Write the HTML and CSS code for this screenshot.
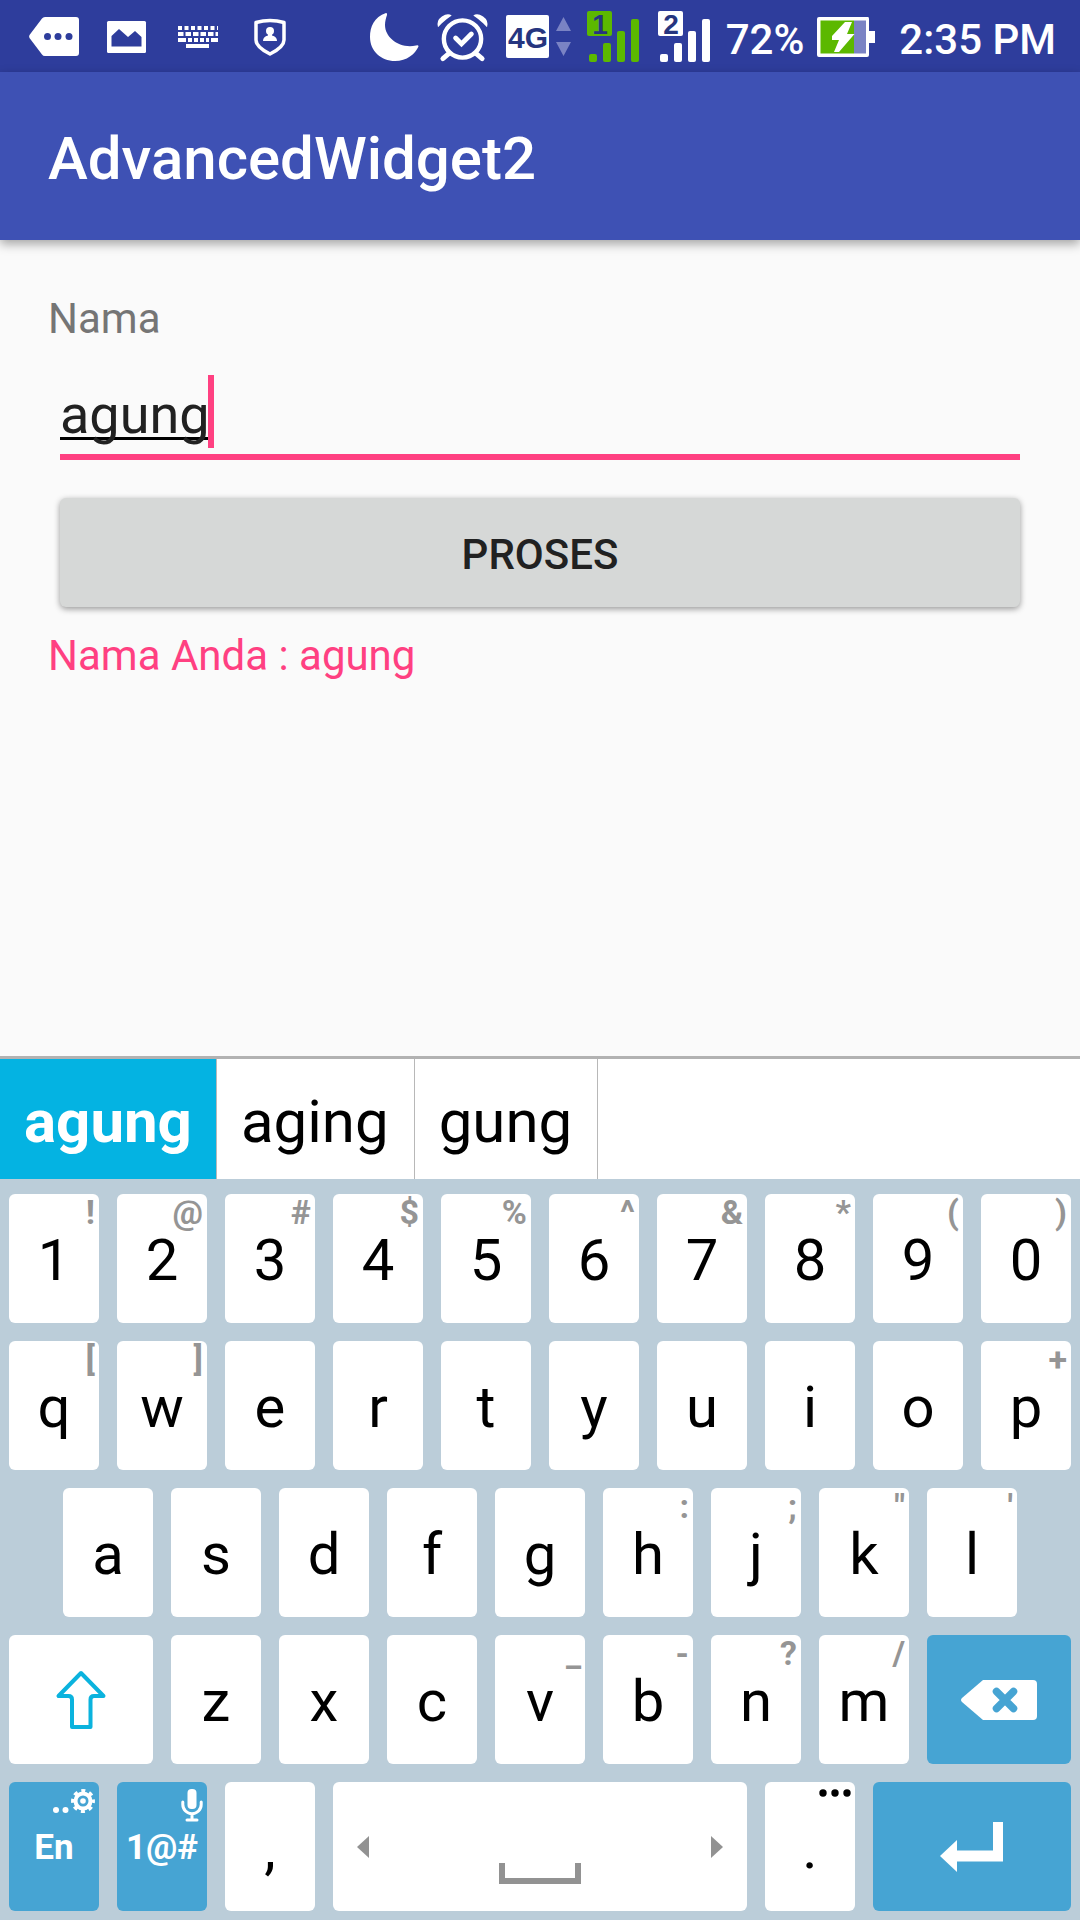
FILE: index.html
```html
<!DOCTYPE html>
<html lang="id">
<head>
<meta charset="utf-8">
<meta name="viewport" content="width=device-width, initial-scale=1">
<title>AdvancedWidget2</title>
<link rel="stylesheet" href="styles.css">
</head>
<body>
<div class="screen">
  <div class="status">
    <div class="notices">
      <span class="notice"><svg width="50" height="40" viewBox="0 0 50 40"><path fill="#fff" d="M13 1.500Q14 0 16 0H47Q50 0 50 3V36Q50 39 47 39H16Q14 39 13 37.500L.5 21Q-.3 19.500.5 18Z"/><g fill="#2e3d9c"><circle cx="18.500" cy="19.500" r="3.500"/><circle cx="29" cy="19.500" r="3.500"/><circle cx="40" cy="19.500" r="3.500"/></g></svg></span>
      <span class="notice"><svg width="39" height="32" viewBox="0 0 39 32"><rect width="39" height="32" rx="1.500" fill="#fff"/><path fill="#2e3d9c" d="M4.500 15 12 8l9 8 7-6 6.500 6v9.500h-30z"/></svg></span>
      <span class="notice"><svg width="40" height="22" viewBox="0 0 40 22"><g stroke="#fff" stroke-width="4" fill="none"><path d="M0 2h40" stroke-dasharray="4 2.500"/><path d="M0 8h40" stroke-dasharray="5.500 2"/><path d="M0 14h8m2 0h4m2 0h4m2 0h4m2 0h3m2 0h7M8 20h23"/></g></svg></span>
      <span class="notice"><svg width="32" height="38" viewBox="0 0 32 38"><path fill="none" stroke="#fff" stroke-width="3.500" stroke-linejoin="round" d="M2 4.500Q16 .5 30 4.500V22Q30 29 16 36Q2 29 2 22Z"/><circle cx="16" cy="13" r="4" fill="#fff"/><path fill="#fff" d="M14 15h4v2.500q5 1 5 5.500H9q0-4.500 5-5.500z"/></svg></span>
    </div>
    <div class="system">
      <svg class="moon" width="49" height="49" viewBox="0 0 49 49"><path fill="#fff" d="M16 0C4 4 0 14 0 24C0 38 11 48 25 48C37 48 45 41 48.500 33.500Q48.500 31.500 46 32.500C30 36 15 25 15 12C15 8 16 5 17 2Q17.500 0 16 0Z"/></svg>
      <svg class="alarm" width="51" height="49" viewBox="0 0 52 49"><g fill="none" stroke="#fff" stroke-linecap="round"><circle cx="26" cy="26" r="19" stroke-width="4.500"/><path stroke-width="5" d="M12 41 6 46M40 41l6 5"/><path stroke-width="5" d="m19 25 6 6 10-10"/></g><path fill="#fff" d="M1 14Q-1 7 5 3T15 2Q9 6 5 10ZM51 14q2-7-4-11T37 2q6 4 10 8Z"/></svg>
      <svg class="network" width="66" height="44" viewBox="0 0 66 44"><rect width="43" height="43" rx="2" fill="#fff"/><text class="badge-text" x="22" y="33" font-size="30" text-anchor="middle">4G</text><path fill="#7a83c4" d="M57.500 2 65 16H50zM57.500 41 65 27H50z"/></svg>
      <svg class="signal" width="53" height="56" viewBox="0 -4 53 56"><g fill="#5cb800"><rect width="25" height="25" rx="2"/><rect x="2" y="43" width="8" height="8" rx="2"/><rect x="16" y="32" width="8" height="19" rx="2"/><rect x="30" y="20" width="8" height="31" rx="2"/><rect x="44" y="8" width="8" height="43" rx="2"/></g><text class="badge-text" x="13" y="23" font-size="28" text-anchor="middle">1</text></svg>
      <svg class="signal" width="53" height="56" viewBox="0 -4 53 56"><g fill="#fff"><rect width="25" height="25" rx="2"/><rect x="2" y="43" width="8" height="8" rx="2"/><rect x="16" y="32" width="8" height="19" rx="2"/><rect x="30" y="20" width="8" height="31" rx="2"/><rect x="44" y="8" width="8" height="43" rx="2"/></g><text class="badge-text" x="13" y="23" font-size="28" text-anchor="middle">2</text></svg>
      <span class="percent">72%</span>
      <svg class="battery" width="58" height="40" viewBox="0 0 58 40"><path fill="#fff" d="M2 0H51Q52 0 52 2V14h6V26H52V38Q52 40 50 40H2Q0 40 0 38V2Q0 0 2 0Z"/><path fill="#7a83c4" d="M37 3.500H49v33H37z"/><path fill="#5cb800" d="M3.500 3.500H37v33H3.500z"/><path fill="#fff" d="M28 5h7l-5 12h7.500L22 35h-5l5-12h-7v-4z"/></svg>
      <span class="clock">2:35 PM</span>
    </div>
  </div>

  <header class="toolbar"><h1 class="title">AdvancedWidget2</h1></header>

  <main class="content">
    <label class="label" for="nama">Nama</label>
    <div class="field">
      <input class="input" id="nama" type="text" value="agung" spellcheck="false" autocomplete="off">
      <span class="caret"></span>
    </div>
    <button class="submit" type="button">PROSES</button>
    <p class="result">Nama Anda : agung</p>
  </main>

  <div class="suggestions">
    <button class="suggestion suggestion-active" type="button">agung</button>
    <button class="suggestion" type="button">aging</button>
    <button class="suggestion" type="button">gung</button>
  </div>

  <div class="keyboard">
    <button class="key" type="button">1<span class="hint">!</span></button>
    <button class="key" type="button">2<span class="hint">@</span></button>
    <button class="key" type="button">3<span class="hint">#</span></button>
    <button class="key" type="button">4<span class="hint">$</span></button>
    <button class="key" type="button">5<span class="hint">%</span></button>
    <button class="key" type="button">6<span class="hint">^</span></button>
    <button class="key" type="button">7<span class="hint">&amp;</span></button>
    <button class="key" type="button">8<span class="hint">*</span></button>
    <button class="key" type="button">9<span class="hint">(</span></button>
    <button class="key" type="button">0<span class="hint">)</span></button>

    <button class="key" type="button">q<span class="hint">[</span></button>
    <button class="key" type="button">w<span class="hint">]</span></button>
    <button class="key" type="button">e</button>
    <button class="key" type="button">r</button>
    <button class="key" type="button">t</button>
    <button class="key" type="button">y</button>
    <button class="key" type="button">u</button>
    <button class="key" type="button">i</button>
    <button class="key" type="button">o</button>
    <button class="key" type="button">p<span class="hint">+</span></button>

    <button class="key key-indent" type="button">a</button>
    <button class="key" type="button">s</button>
    <button class="key" type="button">d</button>
    <button class="key" type="button">f</button>
    <button class="key" type="button">g</button>
    <button class="key" type="button">h<span class="hint">:</span></button>
    <button class="key" type="button">j<span class="hint">;</span></button>
    <button class="key" type="button">k<span class="hint">"</span></button>
    <button class="key" type="button">l<span class="hint">'</span></button>

    <button class="key key-wide key-icon key-shift" type="button" aria-label="Shift"><svg width="50" height="60" viewBox="0 0 50 60"><path fill="none" stroke="#0bb3de" stroke-width="4" stroke-linejoin="round" d="M25 3 2.500 26H12.500Q16 26 16 29.500V57H34.500V29.500Q34.500 26 38 26H47.500Z"/></svg></button>
    <button class="key" type="button">z</button>
    <button class="key" type="button">x</button>
    <button class="key" type="button">c</button>
    <button class="key" type="button">v<span class="hint">_</span></button>
    <button class="key" type="button">b<span class="hint">-</span></button>
    <button class="key" type="button">n<span class="hint">?</span></button>
    <button class="key" type="button">m<span class="hint">/</span></button>
    <button class="key key-wide key-blue key-icon" type="button" aria-label="Backspace"><svg width="76" height="40" viewBox="0 0 76 40"><path fill="#fff" d="M22 0H72Q76 0 76 4V36Q76 40 72 40H22L1 22Q-1 20 1 18Z"/><path stroke="#46a4d3" stroke-width="7.500" stroke-linecap="round" d="m35.500 11.500 17 17m0-17-17 17"/></svg></button>

    <button class="key key-blue" type="button">En<span class="hint"><svg width="42" height="24" viewBox="0 0 42 24"><g fill="#fff"><circle cx="3" cy="21" r="3"/><circle cx="12.500" cy="21" r="3"/></g><g fill="none" stroke="#fff"><circle cx="30" cy="12" r="7.500" stroke-width="4"/><circle cx="30" cy="12" r="10.200" stroke-width="3.500" stroke-dasharray="4 4.010" stroke-dashoffset="2"/></g><circle cx="30" cy="12" r="2.800" fill="#fff"/></svg></span></button>
    <button class="key key-blue" type="button">1@#<span class="hint"><svg width="22" height="33" viewBox="0 0 22 33"><rect x="6.500" width="9" height="20" rx="4" fill="#fff"/><path fill="none" stroke="#fff" stroke-width="3" stroke-linecap="round" d="M1.800 13v2.500a9.200 9.200 0 0 0 18.400 0V13M11 25v5M6 31h10"/></svg></span></button>
    <button class="key" type="button">,</button>
    <button class="key key-space" type="button" aria-label="Space">
      <svg width="12" height="22" viewBox="0 0 12 22"><path fill="#929292" d="M12 0v22L0 11z"/></svg>
      <svg class="bar" width="82" height="22" viewBox="0 0 82 22"><path fill="none" stroke="#929292" stroke-width="6" d="M3 0v18h76V0"/></svg>
      <svg width="12" height="22" viewBox="0 0 12 22"><path fill="#929292" d="M0 0v22l12-11z"/></svg>
    </button>
    <button class="key" type="button">.<span class="hint"><svg class="more" width="32" height="8" viewBox="0 0 32 8"><circle cx="4" cy="4" r="3.700"/><circle cx="16" cy="4" r="3.700"/><circle cx="28" cy="4" r="3.700"/></svg></span></button>
    <button class="key key-enter key-blue key-icon" type="button" aria-label="Enter"><svg width="64" height="50" viewBox="0 0 64 50"><path fill="#fff" d="M53 0H63V39.500H17V50L0 34 17 18V28.500H53Z"/></svg></button>
  </div>
</div>
</body>
</html>
```
FILE: styles.css
```css
* {
  box-sizing: border-box;
}

body {
  margin: 0;
  font-family: Roboto, "Liberation Sans", sans-serif;
  background: #fafafa;
  color: #212121;
}

button,
input {
  margin: 0;
  padding: 0;
  border: 0;
  border-radius: 0;
  font: inherit;
  color: inherit;
  background: none;
}

svg {
  display: block;
  flex: none;
  overflow: visible;
}

.screen {
  display: flex;
  flex-direction: column;
  min-height: 100vh;
}

/* Status bar */
.status {
  display: flex;
  justify-content: space-between;
  height: 72px;
  padding: 2px 24px 0 18px;
  background: #2e3d9c;
  color: #fff;
  font-size: 42px;
  font-weight: 500;
}

.notices,
.system {
  display: flex;
  align-items: center;
}

.notice {
  display: flex;
  justify-content: center;
  width: 72px;
}

.moon,
.alarm,
.signal {
  margin-right: 18px;
}

.signal {
  margin-bottom: 4px;
}

.signal + .signal {
  margin-right: 15px;
}

.network {
  margin-right: 15px;
}

.percent,
.clock {
  padding-top: 5px;
  line-height: 50px;
}

.percent {
  margin-right: 13px;
}

.battery {
  margin-right: 24px;
}

.badge-text {
  font-family: "Liberation Sans", sans-serif;
  font-weight: 700;
  fill: #26357f;
}

/* App bar */
.toolbar {
  display: flex;
  align-items: center;
  height: 168px;
  padding: 5px 48px 0;
  background: #3e51b4;
  box-shadow: 0 4px 10px rgba(0, 0, 0, .35);
}

.title {
  margin: 0;
  color: #fff;
  font-size: 60px;
  font-weight: 500;
}

/* Form */
.content {
  display: flex;
  flex: 1;
  flex-direction: column;
  padding: 49px 48px 48px;
  font-size: 42px;
  line-height: 60px;
}

.label {
  color: #757575;
}

.field {
  position: relative;
  margin: 0 12px;
}

.input {
  display: block;
  width: 100%;
  height: 111px;
  padding: 29px 0 3px;
  border-bottom: 6px solid #ff4081;
  outline: 0;
  font-size: 54px;
  line-height: 73px;
  text-decoration: underline 3px #000;
  text-decoration-skip-ink: none;
  text-underline-offset: 4px;
}

.caret {
  position: absolute;
  left: 148px;
  top: 26px;
  width: 6px;
  height: 73px;
  background: #ff4081;
}

.submit {
  height: 109px;
  margin: 38px 12px 19px;
  padding-top: 4px;
  border-radius: 6px;
  background: #d6d8d7;
  box-shadow: 0 2px 6px rgba(0, 0, 0, .4);
  font-weight: 500;
}

.result {
  margin: 0;
  color: #ff4081;
}

/* Word suggestions */
.suggestions {
  display: flex;
  height: 123px;
  border-top: 3px solid #b2b2b2;
  background: #fff;
}

.suggestion {
  padding: 4px 25px 0 24px;
  border-right: 1px solid #b8b8b8;
  color: #000;
  font-size: 60px;
}

.suggestion-active {
  padding-right: 24px;
  background: #04b3e2;
  color: #fff;
  font-weight: 700;
}

/* Keyboard: twenty half-key columns */
.keyboard {
  display: grid;
  grid-template-columns: repeat(20, 1fr);
  row-gap: 18px;
  padding: 15px 0 9px;
  background: #bbcdd9;
}

.key {
  position: relative;
  grid-column: span 2;
  height: 129px;
  margin: 0 9px;
  padding-top: 3px;
  border-radius: 6px;
  background: #fff;
  color: #000;
  font-size: 58px;
}

.key-indent {
  grid-column: 2 / span 2;
}

.key-wide {
  grid-column: span 3;
}

.key-shift {
  grid-column: 1 / span 3;
}

.key-enter {
  grid-column: span 4;
}

.key-blue {
  padding-top: 2px;
  background: #46a4d3;
  color: #fff;
  font-size: 35px;
  font-weight: 700;
}

.key-icon {
  display: flex;
  align-items: center;
  justify-content: center;
  padding: 0;
}

.key-space {
  display: flex;
  grid-column: span 8;
  align-items: center;
  justify-content: space-between;
  padding: 0 24px;
}

.bar {
  margin-top: 54px;
}

.hint {
  position: absolute;
  top: 1px;
  right: 4px;
  color: #959595;
  font-size: 34px;
  font-weight: 700;
  line-height: 34px;
}

.hint svg {
  margin-top: 6px;
}
```
